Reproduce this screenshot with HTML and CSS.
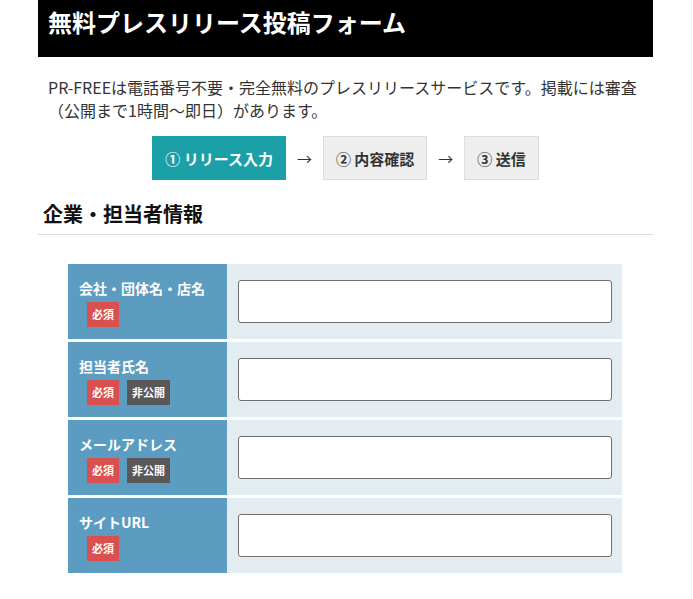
FILE: index.html
```html
<!DOCTYPE html>
<html lang="ja">
<head>
<meta charset="utf-8">
<title>無料プレスリリース投稿フォーム</title>
<link rel="stylesheet" href="styles.css">
</head>
<body>
<div class="page">
  <main class="content">
    <h1 class="page-title">無料プレスリリース投稿フォーム</h1>
    <p class="intro">PR-FREEは電話番号不要・完全無料のプレスリリースサービスです。掲載には審査（公開まで1時間〜即日）があります。</p>
    <div class="steps">
      <div class="step step-active">① リリース入力</div>
      <span class="arrow">→</span>
      <div class="step">② 内容確認</div>
      <span class="arrow">→</span>
      <div class="step">③ 送信</div>
    </div>
    <h2 class="section-title">企業・担当者情報</h2>
    <div class="form-table">
      <div class="form-row">
        <div class="label-cell">
          <div class="label-name">会社・団体名・店名</div>
          <div class="badges"><span class="badge badge-req">必須</span></div>
        </div>
        <div class="input-cell"><input class="text-input" type="text"></div>
      </div>
      <div class="form-row">
        <div class="label-cell">
          <div class="label-name">担当者氏名</div>
          <div class="badges"><span class="badge badge-req">必須</span><span class="badge badge-priv">非公開</span></div>
        </div>
        <div class="input-cell"><input class="text-input" type="text"></div>
      </div>
      <div class="form-row">
        <div class="label-cell">
          <div class="label-name">メールアドレス</div>
          <div class="badges"><span class="badge badge-req">必須</span><span class="badge badge-priv">非公開</span></div>
        </div>
        <div class="input-cell"><input class="text-input" type="text"></div>
      </div>
      <div class="form-row">
        <div class="label-cell">
          <div class="label-name">サイトURL</div>
          <div class="badges"><span class="badge badge-req">必須</span></div>
        </div>
        <div class="input-cell"><input class="text-input" type="text"></div>
      </div>
    </div>
  </main>
  <aside class="side-edge"></aside>
</div>
</body>
</html>
```

FILE: styles.css
```css
html, body {
  margin: 0;
  padding: 0;
  background: #fff;
}
body {
  font-family: "Noto Sans CJK JP", "Noto Sans", "Liberation Sans", sans-serif;
  color: #333;
}
.page {
  display: flex;
  height: 599px;
  overflow: hidden;
}
.content {
  margin-left: 38px;
  width: 615px;
  flex: none;
}
.side-edge {
  margin-left: auto;
  width: 1px;
  margin-right: 1px;
  background: #f0f0f0;
}
.page-title {
  margin: 0;
  background: #000;
  color: #fff;
  font-size: 24px;
  font-weight: 700;
  height: 57px;
  box-sizing: border-box;
  padding: 6px 10px 0;
  line-height: 32px;
}
.intro {
  margin: 19px 0 0;
  padding: 0 10px;
  font-size: 16px;
  line-height: 23px;
  color: #333;
}
.steps {
  display: flex;
  justify-content: center;
  align-items: center;
  gap: 11px;
  margin-top: 14px;
}
.step {
  height: 44px;
  box-sizing: border-box;
  padding: 0 12px;
  display: flex;
  align-items: center;
  font-size: 15px;
  font-weight: 700;
  background: #eeeeee;
  border: 1px solid #dddddd;
  color: #333;
  white-space: nowrap;
}
.step-active {
  background: #1ca0a8;
  border-color: #1ca0a8;
  color: #fff;
}
.arrow {
  font-size: 15px;
  color: #333;
}
.section-title {
  margin: 19px 0 0;
  padding: 0 5px 6px;
  font-size: 20px;
  font-weight: 700;
  line-height: 29px;
  color: #111;
  border-bottom: 1px solid #dcdcdc;
}
.form-table {
  margin: 29px 31px 0 30px;
  display: flex;
  flex-direction: column;
  gap: 3px;
}
.form-row {
  display: flex;
  height: 75px;
}
.label-cell {
  width: 159px;
  flex: none;
  box-sizing: border-box;
  background: #5b9cc0;
  color: #fff;
  padding: 14px 0 0 11px;
}
.label-name {
  font-size: 14px;
  font-weight: 700;
  line-height: 21px;
  white-space: nowrap;
}
.badges {
  display: flex;
  gap: 8px;
  margin: 3px 0 0 8px;
}
.badge {
  height: 25px;
  line-height: 25px;
  padding: 0 5px;
  font-size: 11px;
  font-weight: 700;
  color: #fff;
}
.badge-req {
  background: #d8514f;
}
.badge-priv {
  background: #585858;
}
.input-cell {
  flex: 1;
  background: #e2ecf1;
  box-sizing: border-box;
  padding: 16px 10px 16px 11px;
}
.text-input {
  display: block;
  width: 100%;
  height: 43px;
  box-sizing: border-box;
  border: 1px solid #6f6f6f;
  border-radius: 3px;
  background: #fff;
  margin: 0;
  padding: 0 8px;
  font: inherit;
}
```
